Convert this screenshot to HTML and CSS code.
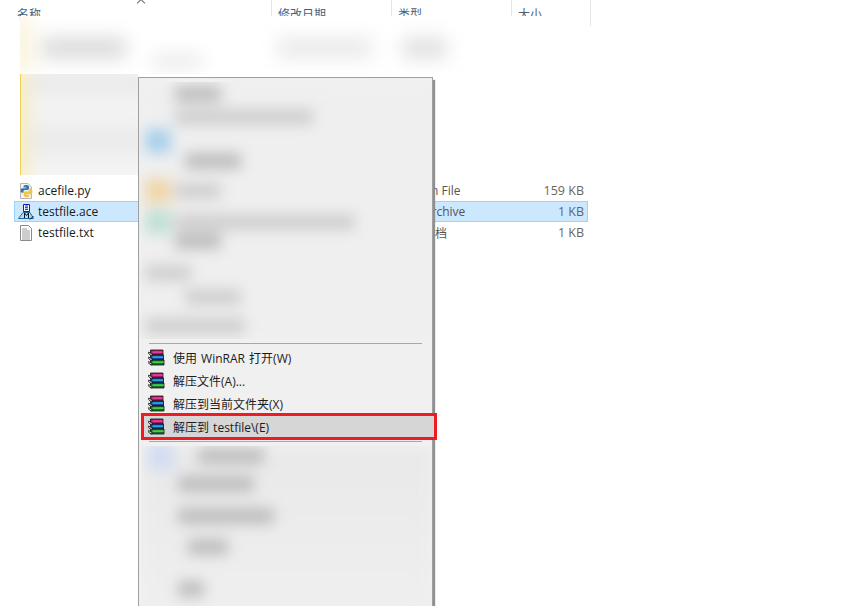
FILE: index.html
```html
<!DOCTYPE html>
<html lang="zh">
<head>
<meta charset="utf-8">
<title>testfile</title>
<link rel="stylesheet" href="styles.css">
</head>
<body>
<svg class="defs" width="0" height="0" aria-hidden="true">
  <symbol id="rar" viewBox="0 0 17 17">
    <path d="M2.5 1 H15 V6 H2.5 Z" fill="#a3195f" stroke="#111" stroke-width=".8"/>
    <path d="M4.5 2.2 H14.6 V4 H4.5 Z" fill="#e63c9a"/>
    <path d="M2.5 6 H15.5 V11 H2.5 Z" fill="#18409c" stroke="#111" stroke-width=".8"/>
    <path d="M4.5 7.2 H15 V9 H4.5 Z" fill="#22a8dc"/>
    <path d="M2.5 11 H16 V16 H2.5 Z" fill="#0d7434" stroke="#111" stroke-width=".8"/>
    <path d="M4.5 12.2 H15.6 V14 H4.5 Z" fill="#52c83c"/>
    <path d="M.6 3 L4 5 V7 L.8 5 Z M.6 8 L4 10 V12 L.8 10 Z M.6 12.5 L4 14.5 V16 L.8 14.5 Z" fill="#fff" stroke="#111" stroke-width=".8"/>
  </symbol>
</svg>

<main class="explorer">
  <header class="head">
    <div class="col-name">名称<span class="sort"></span></div>
    <div class="col">修改日期</div>
    <div class="col">类型</div>
    <div class="col">大小</div>
  </header>

  <div class="files">
    <div class="row">
      <div class="name">
        <svg class="ficon" viewBox="0 0 16 16">
          <path d="M2.5 .5 H10 L13.5 4 V15.5 H2.5 Z" fill="#f2f2f2" stroke="#b5b5b5"/>
          <path d="M8 2 C5.5 2 5.5 3 5.5 4.5 H8.3 V5.2 H4.4 C3 5.2 2.6 6.4 2.6 7.6 C2.6 9 3.2 9.8 4.4 9.8 H5.5 V8.4 C5.5 7.4 6.2 6.9 7 6.9 H9.6 C10.5 6.9 11 6.3 11 5.5 V3.6 C11 2.5 9.8 2 8 2 Z" fill="#3a76a8"/>
          <path d="M11.2 5.6 V7 C11.2 8 10.5 8.6 9.6 8.6 H7 C6.2 8.6 5.8 9.1 5.8 10 V12.2 C5.8 13.4 7 14.2 8.6 14.2 C10.4 14.2 11.4 13.4 11.4 12 H8.6 V11.3 H12.6 C13.6 11.3 14.4 10 14.4 8.4 C14.4 6.8 13.6 5.6 12.4 5.6 Z" fill="#f2c63a"/>
        </svg>
        <span>acefile.py</span>
      </div>
      <div class="type">Python File</div>
      <div class="size">159 KB</div>
    </div>
    <div class="row selected">
      <div class="name">
        <svg class="ficon" viewBox="0 0 16 16">
          <path d="M5.5 .5 H11.5 V7.5 H5.5 Z" fill="#fff" stroke="#1c1c9c"/>
          <path d="M7 2 H10 M7 3.7 H10 M7 5.4 H10" stroke="#1c1cc8"/>
          <path d="M.5 14.5 L5 8.5 H12 L15.5 14.5 Z" fill="#bcd8ee" stroke="#1c6cb0"/>
          <path d="M6.5 14 V9 L8.5 11.5 L10.5 9 V14" fill="none" stroke="#111" stroke-width="1"/>
          <path d="M12 15.5 L15.5 12" stroke="#111" stroke-width="1"/>
        </svg>
        <span>testfile.ace</span>
      </div>
      <div class="type">ACE Archive</div>
      <div class="size">1 KB</div>
    </div>
    <div class="row">
      <div class="name">
        <svg class="ficon" viewBox="0 0 16 16">
          <path d="M2.5 .5 H10.5 L13.5 3.5 V15.5 H2.5 Z" fill="#fff" stroke="#8a8a8a"/>
          <path d="M4 4 H9 M4 6 H12 M4 8 H12 M4 10 H12 M4 12 H12 M4 14 H12" stroke="#9a9a9a"/>
        </svg>
        <span>testfile.txt</span>
      </div>
      <div class="type">文本文档</div>
      <div class="size">1 KB</div>
    </div>
  </div>
</main>

<div class="smudge-wide">
  <div class="smudge-inner wide-inner">
    <span class="blob w-a"></span>
    <span class="blob w-d"></span>
    <span class="blob w-b"></span>
    <span class="blob w-c"></span>
  </div>
</div>
<div class="smudge-left">
  <div class="smudge-inner left-inner">
    <span class="band"></span>
    <span class="band pale"></span>
    <span class="band"></span>
    <span class="band pale"></span>
  </div>
  <div class="edge"></div>
</div>

<nav class="menu">
  <div class="blurred top-blur">
    <div class="blur-inner">
      <div class="br r93"><i class="ic"></i><b class="bar b46"></b></div>
      <div class="br r116"><i class="ic"></i><b class="bar b138 soft"></b></div>
      <div class="br r140"><i class="ic blue"></i></div>
      <div class="br r160"><i class="ic"></i><b class="bar b56 shift"></b></div>
      <div class="br r190"><i class="ic orange"></i><b class="bar b46 soft"></b></div>
      <div class="br r221"><i class="ic green"></i><b class="bar b180 soft"></b></div>
      <div class="br r240"><i class="ic"></i><b class="bar b46"></b></div>
      <div class="br r272"><b class="bar b46 soft flush"></b></div>
      <div class="br r296"><i class="ic"></i><b class="bar b56 soft shift"></b></div>
      <div class="br r325"><b class="bar b100 soft flush"></b></div>
    </div>
  </div>

  <hr class="sep">

  <ul class="items">
    <li class="item"><svg class="rar"><use href="#rar"/></svg><span>使用 WinRAR 打开(W)</span></li>
    <li class="item"><svg class="rar"><use href="#rar"/></svg><span>解压文件(A)...</span></li>
    <li class="item"><svg class="rar"><use href="#rar"/></svg><span>解压到当前文件夹(X)</span></li>
    <li class="item active"><svg class="rar"><use href="#rar"/></svg><span>解压到 testfile\(E)</span></li>
  </ul>

  <hr class="sep sep-low">

  <div class="blurred bottom-blur">
    <div class="blur-inner">
      <div class="br r457"><i class="ic lav"></i><b class="bar b66 far"></b></div>
      <div class="br r485"><i class="ic"></i><b class="bar b76"></b></div>
      <div class="br r517"><i class="ic"></i><b class="bar b96"></b></div>
      <div class="br r548"><i class="ic"></i><b class="bar b40 shift"></b></div>
      <div class="br r590"><i class="ic"></i><b class="bar b26"></b></div>
    </div>
  </div>
</nav>
</body>
</html>
```

FILE: styles.css
```css
* { box-sizing: border-box; }

html, body {
  margin: 0;
  height: 606px;
  overflow: hidden;
  background: #fff;
}

body {
  position: relative;
  font-family: "Noto Sans CJK SC", "Open Sans", sans-serif;
  font-size: 12px;
  color: #1a1a1a;
}

.defs { position: absolute; }

/* Explorer list */
.explorer { padding-left: 14px; }

.head {
  display: grid;
  grid-template-columns: 257px 120px 120px 80px;
  height: 26px;
  color: #4c607a;
}

.col-name {
  position: relative;
  padding: 5px 0 0 3px;
}

.col {
  border-left: 1px solid #e5e5e5;
  padding: 5px 0 0 6px;
}

.head .col:last-child { border-right: 1px solid #e5e5e5; }

.sort {
  position: absolute;
  left: 124px;
  top: 0;
  width: 6px;
  height: 6px;
  border-left: 1px solid #666;
  border-top: 1px solid #666;
  transform: rotate(45deg);
}

.files {
  width: 574px;
  padding-top: 154px;
}

.row {
  display: grid;
  grid-template-columns: 258px 120px 1fr;
  align-items: center;
  height: 21px;
  border: 1px solid transparent;
  font-family: "Open Sans", "Noto Sans CJK SC", sans-serif;
}

.row.selected {
  background: #cce8ff;
  border-color: #99d1ff;
}

.name {
  display: flex;
  align-items: center;
  gap: 4px;
  padding-left: 3px;
  font-size: 12px;
}

.ficon { width: 16px; height: 16px; flex: none; }

.type {
  padding-left: 126px;
  color: #555;
  white-space: nowrap;
}

.size {
  text-align: right;
  padding-right: 3px;
  color: #666;
  font-size: 12.5px;
}

/* Blurred patches over the list */
.smudge-wide,
.smudge-left {
  position: absolute;
  overflow: hidden;
  background: #fff;
}

.smudge-wide { left: 20px; top: 16px; width: 570px; height: 58px; }
.smudge-left {
  left: 20px;
  top: 74px;
  width: 118px;
  height: 101px;
  border-left: 1px solid #f2cf55;
  display: flex;
  flex-direction: column;
}

.smudge-inner { filter: blur(9px); }

.wide-inner {
  display: grid;
  grid-template-columns: 110px 125px 125px 1fr;
  align-items: start;
  height: 100%;
  padding: 21px 0 0 32px;
  margin: 0 -10px;
  background: linear-gradient(90deg, #f8f0d0 0, #fff 34px);
}

.blob { display: block; height: 22px; background: #dcdcdc; }
.w-a { width: 84px; }
.w-d { width: 50px; height: 16px; margin-top: 16px; background: #ececec; }
.w-b { width: 95px; background: #ebebeb; }
.w-c { width: 45px; background: #e2e2e2; }

.left-inner {
  flex: 1;
  display: flex;
  flex-direction: column;
  gap: 2px;
  padding: 0 0 0 18px;
  margin: -8px -10px;
  background: linear-gradient(90deg, #f7e6a8 0, #f8f1d8 22px, #f2f2f2 44px);
}

.band { display: block; height: 28px; background: #ebebeb; margin-right: -10px; }
.band.pale { background: #f3f3f3; }

.edge { width: 13px; height: 1px; background: #f2cf55; flex: none; }

/* Context menu */
.menu {
  position: absolute;
  left: 138px;
  top: 77px;
  width: 295px;
  height: 540px;
  background: #f0f0f0;
  border: 1px solid #a0a0a0;
  box-shadow: 2px 3px 1px #8f8f8f;
}

.blurred { overflow: hidden; }

.top-blur { height: 257px; margin-top: 4px; }
.bottom-blur { height: 170px; margin: 4px 0 0 3px; }

.blur-inner {
  height: 100%;
  padding-left: 6px;
  filter: blur(7px);
}

.top-blur .blur-inner { background: #efefef; }
.bottom-blur .blur-inner { background: linear-gradient(#e9e9e9, #efefef); }

.br { display: flex; align-items: center; height: 14px; }
.ic { display: block; width: 26px; height: 24px; flex: none; }
.ic.blue { background: #a9d0ec; }
.ic.orange { background: #f0d6a8; }
.ic.green { background: #c0e0d4; }
.ic.lav { background: #d2dcf2; height: 28px; }

.bar { display: block; height: 16px; background: #bdbdbd; margin-left: 4px; }
.bar.soft { background: #cfcfcf; }
.bar.shift { margin-left: 14px; }
.bar.flush { margin-left: 0; }
.bar.far { margin-left: 24px; }

.b26 { width: 26px; }
.b40 { width: 40px; }
.b46 { width: 46px; }
.b56 { width: 56px; }
.b66 { width: 66px; }
.b76 { width: 76px; }
.b96 { width: 96px; }
.b100 { width: 100px; }
.b138 { width: 138px; }
.b180 { width: 180px; }

.r93 { margin-top: 5px; }
.r116 { margin-top: 9px; }
.r140 { margin-top: 10px; }
.r160 { margin-top: 6px; }
.r190 { margin-top: 16px; }
.r221 { margin-top: 17px; }
.r240 { margin-top: 5px; }
.r272 { margin-top: 18px; }
.r296 { margin-top: 10px; }
.r325 { margin-top: 15px; }

.r457 { margin-top: 3px; }
.r485 { margin-top: 14px; }
.r517 { margin-top: 18px; }
.r548 { margin-top: 17px; }
.r590 { margin-top: 28px; }

.sep {
  height: 1px;
  margin: 4px 10px 0;
  border: 0;
  background: #a8a8a8;
}

.sep-low { margin-top: 1px; }

.items {
  list-style: none;
  margin: 2px 0 0;
  padding: 0;
}

.item {
  display: flex;
  align-items: center;
  gap: 8px;
  height: 23px;
  padding-left: 9px;
  color: #1c1c1c;
  white-space: nowrap;
  font-family: "Open Sans", "Noto Sans CJK SC", sans-serif;
  word-spacing: 1px;
}

.rar { width: 17px; height: 17px; flex: none; }

.item.active {
  height: 27px;
  margin: -2px -5px 0 2px;
  padding-left: 4px;
  background: #d6d6d6;
  border: 3px solid #ed1c24;
}
```
